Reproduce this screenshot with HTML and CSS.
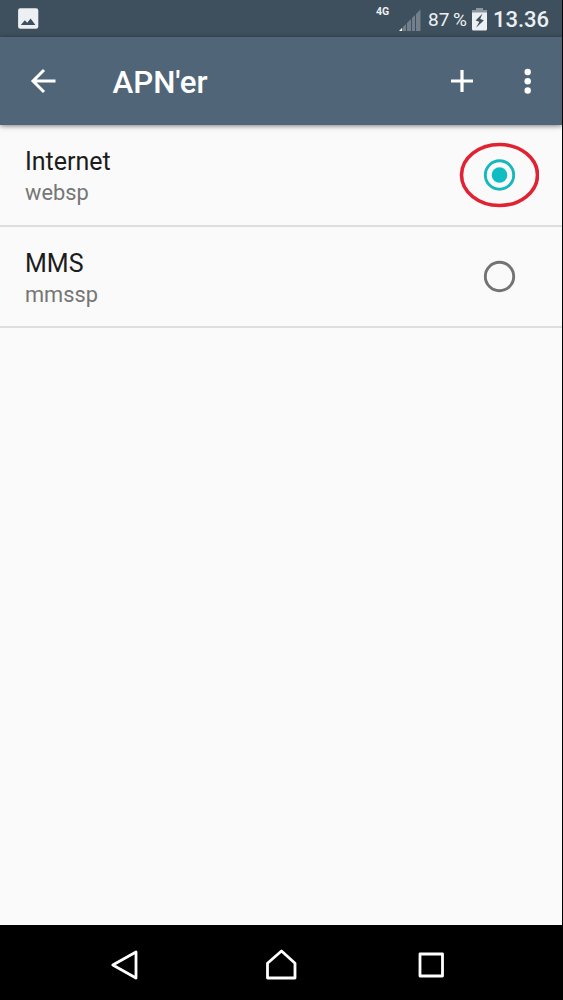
FILE: index.html
```html
<!DOCTYPE html>
<html lang="da">
<head>
<meta charset="utf-8">
<title>APN'er</title>
<link rel="stylesheet" href="styles.css">
</head>
<body>
<div class="screen">
  <header class="status">
    <svg class="picture" width="21" height="21" viewBox="0 0 21 21"><rect x=".1" y=".3" width="20.2" height="20.4" rx="2.2" fill="#edf0f3"/><path d="M2.800 17l4-4.800 2.400 2.600 3.400-4.400L17.400 17z" fill="#3e4f5e"/></svg>
    <span class="network">4G</span>
    <svg class="signal" width="22" height="22" viewBox="0 0 22 22"><path fill="#73808b" d="M4 18l3-3v7H4zM8 14l4-4v12H8zM13 9l3-3v16h-3zM17 5l4.500-4.500V22H17z"/><path fill="#fff" d="M0 22l3.200-3.200V22z"/></svg>
    <span class="percent">87 %</span>
    <svg class="battery" width="15" height="23" viewBox="0 0 15 23"><path fill="#8b969f" d="M4 0h7v2h4v3H0V2h4z"/><path fill="#edf0f3" d="M0 4.500h15V21q0 1.500-1.500 1.500h-12Q0 22.500 0 21z"/><path fill="#3e4f5e" d="M10.500 5.500L3.600 12.400l3.700 1.300-3.200 6L11.900 12.300 8.200 11z"/></svg>
    <span class="clock">13.36</span>
  </header>
  <div class="toolbar">
    <svg class="back" width="27" height="26" viewBox="0 0 27 26"><path d="M25.500 13H3M14 2L3 13l11 11" fill="none" stroke="#fff" stroke-width="3"/></svg>
    <h1 class="title">APN'er</h1>
    <svg class="add" width="22" height="22" viewBox="0 0 22 22"><path d="M11 0v22M0 11h22" stroke="#fff" stroke-width="3.200"/></svg>
    <svg class="more" width="8" height="26" viewBox="0 0 8 26" fill="#fff"><circle cx="3.700" cy="4" r="3.200"/><circle cx="3.700" cy="13.200" r="3.200"/><circle cx="3.700" cy="22.500" r="3.200"/></svg>
  </div>
  <main class="list">
    <div class="row">
      <div class="label"><div class="name">Internet</div><div class="apn">websp</div></div>
      <svg class="choice" width="80" height="66" viewBox="0 0 80 66"><ellipse cx="40.500" cy="33" rx="38" ry="30.500" fill="none" stroke="#e02232" stroke-width="3.600"/><circle cx="40.500" cy="33" r="14.200" fill="none" stroke="#14b8bd" stroke-width="2.900"/><circle cx="40.500" cy="33" r="7.800" fill="#10bdc3"/></svg>
    </div>
    <div class="row">
      <div class="label"><div class="name">MMS</div><div class="apn">mmssp</div></div>
      <svg class="choice" width="80" height="66" viewBox="0 0 80 66"><circle cx="40.500" cy="32.500" r="14.200" fill="none" stroke="#737373" stroke-width="2.900"/></svg>
    </div>
  </main>
  <nav class="nav">
    <svg class="nav-back" width="28" height="32" viewBox="0 0 28 32"><path d="M2.800 16L26 3v26z"/></svg>
    <svg class="nav-home" width="32" height="32" viewBox="0 0 32 32"><path d="M2.500 29V14.200L16.500 2 30 14.200V29z"/></svg>
    <svg class="nav-recent" width="26" height="26" viewBox="0 0 26 26"><path d="M2 2h22.500v22H2z"/></svg>
  </nav>
</div>
</body>
</html>
```
FILE: styles.css
```css
* { box-sizing: border-box; }
body { margin: 0; background: #000; font-family: Roboto, sans-serif; }
svg { display: block; flex: none; }
.screen { width: 563px; height: 1000px; display: flex; flex-direction: column; border-right: 1px solid #000; background: #fafafa; }
.status { height: 37px; flex: none; display: flex; padding: 0 0 0 18px; background: #3e4f5e; color: #edf0f3; white-space: nowrap; }
.picture { margin-top: 8px; }
.network { width: 23px; margin: 5px 0 0 auto; font-size: 10.5px; line-height: 13px; font-weight: 700; }
.signal { margin-top: 9px; }
.percent { width: 44px; margin-left: 7px; font-size: 19px; line-height: 40px; word-spacing: -1px; }
.battery { margin-top: 8px; }
.clock { width: 69px; margin-left: 6px; font-size: 22px; line-height: 40px; font-weight: 500; }
.toolbar { height: 88px; flex: none; display: flex; align-items: center; padding: 0 30px 0 30px; background: #506678; color: #fff; box-shadow: 0 1px 5px rgba(0, 0, 0, .5); z-index: 1; }
.title { margin: 4px 0 0 55.5px; font-size: 31.25px; line-height: 40px; font-weight: 500; }
.add { margin-left: auto; }
.more { margin-left: 51px; }
.list { flex: 1; }
.row { display: flex; justify-content: space-between; height: 101.500px; padding: 20px 23px 0 25px; border-bottom: 2px solid #dedede; }
.name { padding-top: 1px; font-size: 25px; line-height: 32px; color: #1c1c1c; }
.row + .row .name { line-height: 31px; }
.row + .row .apn { line-height: 32px; }
.apn { font-size: 21.8px; line-height: 30px; color: #767676; }
.choice { margin-top: -3px; }
.nav { height: 75px; flex: none; display: flex; align-items: center; padding: 5px 0 0 110px; background: #000; }
.nav path { fill: none; stroke: #fff; stroke-width: 2.800; stroke-linejoin: round; }
.nav-home { margin-left: 127px; }
.nav-recent { margin-left: 121px; }
```
